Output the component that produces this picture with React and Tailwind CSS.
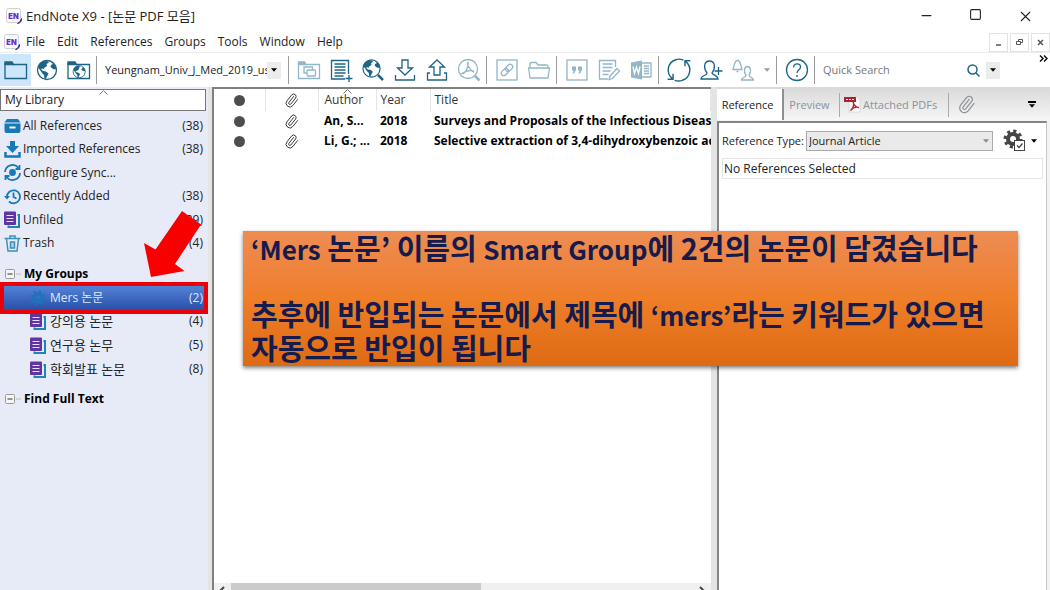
import { useState } from 'react';
import { Minus, Square, X, Paperclip } from 'lucide-react';

const DARK = '#1f6485';
const FADED = '#93b6c8';

const menus = ['File', 'Edit', 'References', 'Groups', 'Tools', 'Window', 'Help'];

const references = [
  { id: 1, author: 'An, S...', year: '2018', title: 'Surveys and Proposals of the Infectious Disease Control' },
  { id: 2, author: 'Li, G.; ...', year: '2018', title: 'Selective extraction of 3,4-dihydroxybenzoic acid' },
];

function Icon({ color = DARK, size = 24, children }) {
  return (
    <svg width={size} height={size} viewBox="0 0 24 24" fill="none" stroke={color} strokeWidth="1.3" aria-hidden="true">
      {children}
    </svg>
  );
}

function Caret({ className = 'text-black' }) {
  return (
    <svg width="6" height="4" viewBox="0 0 7 4" className={className} aria-hidden="true">
      <path d="M0 0h7L3.5 4z" fill="currentColor" />
    </svg>
  );
}

function SortMark() {
  return (
    <svg width="9" height="5" viewBox="0 0 9 5" fill="none" stroke="#777" className="absolute top-0" aria-hidden="true">
      <path d="M.5 4.5l4-4 4 4" />
    </svg>
  );
}

function AppLogo() {
  return (
    <svg width="16" height="16" viewBox="0 0 16 16" className="shrink-0" aria-hidden="true">
      <rect x=".5" y=".5" width="14" height="14" rx="2" fill="#fbfafd" stroke="#cfcfd8" />
      <text x="7.5" y="10.5" textAnchor="middle" fontSize="7.5" fontWeight="900" fontFamily="Inter, sans-serif" fill="#6a2fd0">EN</text>
      <path d="M15.5 10.5c.5 2.500-1 4.500-4 5 2-1 3-2.500 4-5z" fill="#3b2a8c" stroke="#3b2a8c" />
    </svg>
  );
}

// continents shared by every globe icon
function Globe() {
  return (
    <g>
      <circle cx="12" cy="12" r="9.500" />
      <path
        d="M4 6.500C6 4 9 2.500 12 3l2 1.500-2.500 1.500.5 2-3 2 .5 1.500-2-1-1.500.5 2 2 3 .5 2.500 2-1.500 3-1.500 3-1-.5-.5-4-2-2L5 12 3 9.500zM16 3.500l4 3 1.500 4-1 1-2.500-.5-2.500-2 .5-2 2-1z"
        fill={DARK}
        stroke="none"
      />
    </g>
  );
}

function FolderIcon() {
  return (
    <Icon>
      <path d="M1 4h7l1.500 2.500H1z" fill={DARK} />
      <path d="M1 5v15.500h21.500v-14H9" />
    </Icon>
  );
}

function GlobeFolderIcon() {
  return (
    <Icon>
      <path d="M1 4h7l1.500 2.500H1z" fill={DARK} />
      <path d="M1 5v15.500h21.500v-14H9" />
      <g transform="translate(4.500 6) scale(.64)"><Globe /></g>
    </Icon>
  );
}

function CopyFolderIcon() {
  return (
    <Icon color={FADED}>
      <path d="M1.500 4h6l1.500 2.500H1.500z" fill={FADED} />
      <path d="M1.500 5v15.500h21v-14H9M7 9h8.500v6H7z" />
      <rect x="10" y="12" width="8.500" height="6" rx="1" fill="#fff" />
    </Icon>
  );
}

function NewReferenceIcon() {
  return (
    <Icon>
      <path d="M16 21H2.500V2.500h17V16M5.500 6h11M5.500 9h11M5.500 12h11M5.500 15h11M5.500 18h9M20 17v7M16.500 20.500h7" />
    </Icon>
  );
}

function GlobeSearchIcon() {
  return (
    <Icon>
      <g transform="translate(-.3 -.3) scale(.9)"><Globe /></g>
      <path d="M17 17l5 5" strokeWidth="2.500" />
    </Icon>
  );
}

function ImportIcon() {
  return (
    <Icon>
      <path d="M9 2h6v8h4.500L12 17 4.500 10H9zM2.500 17v5h19v-5" />
    </Icon>
  );
}

function ExportIcon() {
  return (
    <Icon>
      <path d="M9 17h6V9h4.500L12 2 4.500 9H9zM5 15H2.500v7h19v-7H19" />
    </Icon>
  );
}

function PdfSearchIcon() {
  return (
    <Icon color={FADED}>
      <circle cx="11" cy="11" r="9.500" />
      <path d="M11 4.500c-1.500 1 .5 6 5.500 9.500 1-2-6-2.500-11.500 1.500 4.500 0 6.500-8 6-11z" />
      <path d="M18 18l4.500 4.500" strokeWidth="2.500" />
    </Icon>
  );
}

function LinkIcon() {
  return (
    <Icon color={FADED}>
      <rect x="2" y="2" width="20" height="20" />
      <g transform="rotate(-45 12 12)">
        <rect x="5" y="9.500" width="8" height="5" rx="2.500" />
        <rect x="11" y="9.500" width="8" height="5" rx="2.500" />
      </g>
    </Icon>
  );
}

function OpenFolderIcon() {
  return (
    <Icon color={FADED}>
      <path d="M3 9.500V5.500l1-1h5l2 2.500h9l1 1v1.500M1.500 10h21L21 20H3z" strokeLinejoin="round" />
    </Icon>
  );
}

function QuoteIcon() {
  return (
    <Icon color={FADED}>
      <rect x="2" y="2" width="20" height="20" />
      <path d="M7 8.500h4v3.500l-2 3.500H7.500l1-3H7zM13 8.500h4v3.500l-2 3.500h-1.500l1-3H13z" fill={FADED} stroke="none" />
    </Icon>
  );
}

function EditDocIcon() {
  return (
    <Icon color={FADED}>
      <path d="M11 21H2.500V2.500h16V9M5.500 6h10M5.500 9.500h10M5.500 13h8M5.500 16.500h6" />
      <path d="M20 10.500l2.500 2.500-7 7.500-3.500 1 1-3.500z" />
    </Icon>
  );
}

function WordIcon() {
  return (
    <Icon color={FADED}>
      <path d="M2 4.500l11-2v19l-11-2z" fill={FADED} stroke="none" />
      <path d="M4 8.500l1.500 7 2-6.500 2 6.500L11 8.500" stroke="#fff" />
      <path d="M13 5h9v14h-9M15 8h5M15 10.500h5M15 13h5M15 15.500h5" />
    </Icon>
  );
}

function SyncIcon() {
  return (
    <Icon size={26}>
      <path d="M6 20A10 10 0 0 1 9 2.500a10 10 0 0 1 7 .3M1.500 20.500h5v-5M18 4a10 10 0 0 1-3 17.500 10 10 0 0 1-7 0M22.500 3.500h-5v5" />
    </Icon>
  );
}

function AddUserIcon() {
  return (
    <Icon>
      <path d="M16 21H2c0-4 6-3 6-6-4-5-3-12 2.500-12S17 10 13 15c0 2 6 2 6 6h-5M19.500 9v8M15.500 13h8" />
    </Icon>
  );
}

function AlertUserIcon() {
  return (
    <Icon color={FADED}>
      <path d="M1.500 11.500c2-1 1-9 5-9s3 8 5 9zM5.500 13.500h2" />
      <path d="M22.500 22h-12c0-3 4.500-2 4.500-5-2.500-3-2-8.500 1.500-8.500s4 5.500 1.500 8.500c0 3 4.500 2 4.500 5z" />
    </Icon>
  );
}

function HelpIcon() {
  return (
    <Icon>
      <circle cx="12" cy="12" r="10.500" />
      <path d="M8.500 9.500c0-5 7-4.500 7-.5 0 3-3.500 3-3.500 6M12 17v2" />
    </Icon>
  );
}

function ToolButton({ label, active, children }) {
  return (
    <button
      aria-label={label}
      className={`flex shrink-0 items-center justify-center ${active ? 'h-8 w-[31px] bg-[#cce6fb]' : 'h-8 w-8'}`}
    >
      {children}
    </button>
  );
}

function Separator() {
  return <div className="ml-px mr-1 h-7 w-px shrink-0 bg-[#9b9b9b]" />;
}

function AllIcon() {
  return (
    <svg width="17" height="16" viewBox="0 0 17 16" aria-hidden="true">
      <path d="M3 1h11l2.500 3.500H.5zM.5 5.500h16V13a2 2 0 0 1-2 2h-12a2 2 0 0 1-2-2z" fill="#1779b5" />
      <path d="M5.500 9.500h6" stroke="#fff" strokeWidth="2" />
    </svg>
  );
}

function ImportedIcon() {
  return (
    <svg width="17" height="17" viewBox="0 0 17 17" aria-hidden="true">
      <path d="M6 0h5v5h4l-6.500 7L2 5h4z" fill="#1779b5" />
      <path d="M1.500 11v4.500h14V11" stroke="#1779b5" strokeWidth="2.500" fill="none" />
    </svg>
  );
}

function ConfigureIcon() {
  return (
    <svg width="17" height="17" viewBox="0 0 17 17" fill="none" stroke="#1779b5" strokeWidth="1.800" aria-hidden="true">
      <circle cx="8.500" cy="8.500" r="2.500" fill="#1779b5" />
      <path d="M1 8a7.500 7.500 0 0 1 13.500-4M16 9a7.500 7.500 0 0 1-13.500 4M15.500 1v4h-4M1.500 16v-4h4" />
    </svg>
  );
}

function RecentIcon() {
  return (
    <svg width="17" height="17" viewBox="0 0 17 17" fill="none" stroke="#1779b5" strokeWidth="1.800" aria-hidden="true">
      <path d="M3 9a6.500 6.500 0 1 1 2 4.500M9.500 4.500V9l3 1.500" />
      <path d="M0 8h6L3 11.500z" fill="#1779b5" stroke="none" />
    </svg>
  );
}

function GroupIcon() {
  return (
    <svg width="17" height="17" viewBox="0 0 17 17" aria-hidden="true">
      <path d="M13.500 4H15v12H4.500v-1.500" fill="none" stroke="#1d84bd" strokeWidth="2" />
      <rect x="0" y=".5" width="12" height="13.500" rx="1" fill="#5f35a5" />
      <path d="M2.500 4.500h7M2.500 7.500h7M2.500 10.500h7" stroke="#e8e0f5" />
    </svg>
  );
}

function TrashIcon() {
  return (
    <svg width="17" height="17" viewBox="0 0 17 17" fill="none" stroke="#3d90b8" strokeWidth="1.500" aria-hidden="true">
      <path d="M.5 3.500h16M6 3V1h5v2M2.500 4L4 16h9l1.500-12" />
      <path d="M6.500 7h4v6h-4z" fill="#a9d3e6" />
    </svg>
  );
}

function GearShape({ color, size }) {
  return (
    <svg width={size} height={size} viewBox="0 0 20 20" fill="none" stroke={color} aria-hidden="true">
      <circle cx="10" cy="10" r="5" strokeWidth="4" />
      <circle cx="10" cy="10" r="8" strokeWidth="3" strokeDasharray="3.140 3.140" />
    </svg>
  );
}

function PdfIcon() {
  return (
    <svg width="17" height="17" viewBox="0 0 17 17" aria-hidden="true">
      <path d="M5 1h8l3 3v12H5z" fill="#fff" stroke="#d8d8d8" />
      <rect x="0" y="1" width="12" height="5" fill="#b3202a" />
      <path d="M2 3.500h8" stroke="#fff" strokeDasharray="2 1" />
      <path d="M9 5.500c1 4 3 6 6 6-3-1-6 0-8.500 3 2.500-2 4-6 2.500-9z" fill="none" stroke="#b3202a" strokeWidth="1.300" />
    </svg>
  );
}

const library = [
  { name: 'All References', count: 38, icon: AllIcon },
  { name: 'Imported References', count: 38, icon: ImportedIcon },
  { name: 'Configure Sync...', icon: ConfigureIcon },
  { name: 'Recently Added', count: 38, icon: RecentIcon },
  { name: 'Unfiled', count: 29, icon: GroupIcon },
  { name: 'Trash', count: 4, icon: TrashIcon },
];

const groups = [
  { name: 'Mers 논문', count: 2, smart: true },
  { name: '강의용 논문', count: 4 },
  { name: '연구용 논무', count: 5 },
  { name: '학회발표 논문', count: 8 },
];

function GroupHeading({ children }) {
  return (
    <h2 className="flex items-center pl-[5px] font-bold text-black">
      <svg width="19" height="10" viewBox="0 0 19 10" aria-hidden="true">
        <rect x=".5" y=".5" width="9" height="9" rx="1" fill="#f4f4f4" stroke="#9a9a9a" />
        <path d="M2.500 5h5" stroke="#333" />
        <path d="M11 5h5" stroke="#bbb" />
      </svg>
      {children}
    </h2>
  );
}

function Sidebar() {
  return (
    <aside className="relative w-52 shrink-0 bg-[#e7ebf8] text-[#222]">
      <div className="relative mr-0.5 mt-0.5 flex h-[22px] items-center justify-center border border-[#777] bg-white">
        <SortMark />
        <span className="w-full pl-1">My Library</span>
      </div>

      <ul className="mt-[3px] grid h-[141px] grid-rows-6">
        {library.map((item) => (
          <li key={item.name} className="flex items-center pl-1 pr-[5px]">
            <item.icon />
            <span className="flex-1 pl-[2px]">{item.name}</span>
            {item.count && <span>({item.count})</span>}
          </li>
        ))}
      </ul>

      <div className="mt-[7px] grid h-[119px] grid-rows-5">
        <GroupHeading>My Groups</GroupHeading>
        {groups.map((item) => (
          <div
            key={item.name}
            className={`relative flex items-center pl-[30px] pr-[5px] ${item.smart ? 'text-[#dfe8ff]' : 'z-0'}`}
          >
            {item.smart && (
              <div className="absolute -inset-y-1 inset-x-0 z-10 border-4 border-[#ea0008] bg-linear-to-b from-[#5283d6] to-[#2a4fa8]" />
            )}
            <span className="relative z-10 flex w-[17px]">
              {item.smart ? <GearShape color="#1b74bd" size={16} /> : <GroupIcon />}
            </span>
            <span className={`relative z-10 flex-1 pl-[3px] ${item.smart ? 'text-[12px]' : 'text-[13px]'}`}>{item.name}</span>
            <span className="relative z-10">({item.count})</span>
          </div>
        ))}
      </div>

      <div className="mt-1.5 grid h-6">
        <GroupHeading>Find Full Text</GroupHeading>
      </div>

      {/* callout arrow pointing at the smart group */}
      <svg width="58" height="66" viewBox="0 0 58 66" className="absolute left-[144px] top-[124px]" aria-hidden="true">
        <path d="M38 0l19 13.500L31 53l9.500 7L7 66 0 32l11.500 6.500z" fill="#f80000" />
      </svg>
    </aside>
  );
}

function ReferenceList() {
  return (
    <main className="flex min-w-0 flex-1 flex-col border-l-2 border-t-2 border-[#808080] bg-white">
      <div className="flex-1 overflow-hidden">
        <table className="w-full table-fixed text-left text-black">
          <colgroup>
            <col className="w-[51px]" />
            <col className="w-[53px]" />
            <col className="w-[58px]" />
            <col className="w-[54px]" />
            <col />
          </colgroup>
          <thead>
            <tr className="h-[22px] text-[#333] [&>th]:border-r [&>th]:border-[#e5e5e5] [&>th]:font-normal">
              <th aria-label="Read status"><span className="mx-auto block size-[11px] rounded-full bg-[#4d4d4d]" /></th>
              <th aria-label="Attachment"><Paperclip size={15} strokeWidth={1.5} className="mx-auto -rotate-6" /></th>
              <th className="relative pl-1.5">
                <span className="absolute inset-x-0 top-0 flex justify-center"><SortMark /></span>
                Author
              </th>
              <th className="pl-1">Year</th>
              <th className="pl-1">Title</th>
            </tr>
          </thead>
          <tbody>
            {references.map((ref) => (
              <tr key={ref.id} className="h-5 font-bold">
                <td><span className="mx-auto block size-[11px] rounded-full bg-[#4d4d4d]" /></td>
                <td><Paperclip size={15} strokeWidth={1.5} className="mx-auto -rotate-6 text-[#333]" /></td>
                <td className="whitespace-nowrap pl-1.5">{ref.author}</td>
                <td className="pl-1">{ref.year}</td>
                <td className="overflow-hidden whitespace-nowrap pl-1">{ref.title}</td>
              </tr>
            ))}
          </tbody>
        </table>
      </div>
      <div className="flex h-[7px] items-start justify-between overflow-hidden bg-[#f0f0f0] text-[#444]">
        <svg width="17" height="14" viewBox="0 0 17 14" fill="none" stroke="currentColor" strokeWidth="2" aria-hidden="true"><path d="M10 4L6 8l4 4" /></svg>
        <div className="flex-1"><div className="h-[7px] w-[54%] bg-[#cbcbcb]" /></div>
        <svg width="17" height="14" viewBox="0 0 17 14" fill="none" stroke="currentColor" strokeWidth="2" aria-hidden="true"><path d="M6 4l4 4-4 4" /></svg>
      </div>
    </main>
  );
}

function DetailPanel() {
  const [type, setType] = useState('Journal Article');

  return (
    <section className="flex w-[333px] shrink-0 flex-col bg-[#f3f3f3]">
      <div role="tablist" className="flex h-[33px] items-center bg-linear-to-b from-[#d9d9d9] to-[#f6f6f6] pt-0.5 text-[11px] text-[#8b929b]">
        <button role="tab" aria-selected="true" className="h-full w-[67px] border-r-2 border-[#8f8f8f] bg-white pr-1 text-[#222]">Reference</button>
        <button role="tab" aria-selected="false" className="h-6 w-14 border-r border-[#aaa] pr-1">Preview</button>
        <button role="tab" aria-selected="false" className="flex h-6 w-[109px] items-center gap-0.5 border-r border-[#aaa] pl-1">
          <PdfIcon />
          Attached PDFs
        </button>
        <button role="tab" aria-selected="false" aria-label="Attachments" className="w-9 pl-2">
          <Paperclip size={19} strokeWidth={1.5} className="-rotate-6" />
        </button>
        <button aria-label="Panel options" className="ml-auto mr-3.5 flex flex-col items-center gap-px">
          <span className="h-0.5 w-2 bg-black" />
          <Caret />
        </button>
      </div>

      <div className="mr-[3px] mt-px flex-1 border-l-2 border-r border-t-2 border-[#858585] border-r-[#c8c8c8] bg-white px-[3px] text-[#222]">
        <div className="flex h-[35px] items-center text-[11px]">
          <label htmlFor="reference-type" className="w-[84px] whitespace-nowrap">Reference Type:</label>
          <div className="relative flex min-w-0 flex-1 items-center">
            <select
              id="reference-type"
              value={type}
              onChange={(e) => setType(e.target.value)}
              className="h-5 w-full appearance-none border border-[#aaa] bg-[#eaeaea] pl-0.5"
            >
              <option>Journal Article</option>
            </select>
            <span className="pointer-events-none absolute right-1"><Caret className="text-[#8b8b8b]" /></span>
          </div>
          <button aria-label="Field options" className="ml-2.5 mr-1.5 flex items-center gap-1">
            <span className="relative flex size-[24px]">
              <GearShape color="#444" size={20} />
              <svg width="11" height="11" viewBox="0 0 11 11" className="absolute bottom-0.5 right-0.5" aria-hidden="true">
                <rect x=".5" y=".5" width="10" height="10" fill="#fff" stroke="#444" />
                <path d="M3 5.500l2 2 3.500-4" fill="none" stroke="#444" strokeWidth="1.300" />
              </svg>
            </span>
            <Caret />
          </button>
        </div>
        <p className="flex h-[21px] items-center border border-[#e6e6e6] pl-px">No References Selected</p>
      </div>
    </section>
  );
}

function Toolbar() {
  const [style, setStyle] = useState('Yeungnam_Univ_J_Med_2019_using');
  const [query, setQuery] = useState('');

  return (
    <div className="relative flex h-[35px] items-center border-t border-[#ececec] bg-white">
      <ToolButton label="Local library" active><FolderIcon /></ToolButton>
      <ToolButton label="Online search"><Icon><Globe /></Icon></ToolButton>
      <ToolButton label="Integrated library"><GlobeFolderIcon /></ToolButton>
      <Separator />
      <div className="relative flex w-[186px] shrink-0 items-center pl-1">
        <select
          aria-label="Output style"
          value={style}
          onChange={(e) => setStyle(e.target.value)}
          className="w-[162px] appearance-none overflow-hidden text-[11px] text-[#222]"
        >
          <option>Yeungnam_Univ_J_Med_2019_using</option>
        </select>
        <span className="pointer-events-none flex h-[17px] w-3.5 items-center justify-center bg-[#ececec]"><Caret /></span>
      </div>
      <Separator />
      <ToolButton label="Copy to local library"><CopyFolderIcon /></ToolButton>
      <ToolButton label="New reference"><NewReferenceIcon /></ToolButton>
      <ToolButton label="Search online"><GlobeSearchIcon /></ToolButton>
      <ToolButton label="Import"><ImportIcon /></ToolButton>
      <ToolButton label="Export"><ExportIcon /></ToolButton>
      <ToolButton label="Find full text"><PdfSearchIcon /></ToolButton>
      <Separator />
      <ToolButton label="Open link"><LinkIcon /></ToolButton>
      <ToolButton label="Open file"><OpenFolderIcon /></ToolButton>
      <Separator />
      <ToolButton label="Insert citation"><QuoteIcon /></ToolButton>
      <ToolButton label="Format bibliography"><EditDocIcon /></ToolButton>
      <ToolButton label="Return to word processor"><WordIcon /></ToolButton>
      <Separator />
      <ToolButton label="Sync library"><SyncIcon /></ToolButton>
      <ToolButton label="Share library"><AddUserIcon /></ToolButton>
      <ToolButton label="Activity feed"><AlertUserIcon /></ToolButton>
      <span className="flex w-4 shrink-0 justify-center"><Caret className="text-[#999]" /></span>
      <Separator />
      <ToolButton label="Help"><HelpIcon /></ToolButton>
      <Separator />
      <input
        aria-label="Quick Search"
        placeholder="Quick Search"
        value={query}
        onChange={(e) => setQuery(e.target.value)}
        className="min-w-0 flex-1 pl-1 text-[11px] outline-none placeholder:text-[#777]"
      />
      <button aria-label="Search" className="mr-1.5">
        <svg width="13" height="13" viewBox="0 0 13 13" fill="none" stroke={DARK} strokeWidth="1.500" aria-hidden="true">
          <circle cx="5.500" cy="5.500" r="4.500" />
          <path d="M9 9l3.500 3.500" />
        </svg>
      </button>
      <button aria-label="Search options" className="mr-[50px] flex h-[17px] w-3.5 items-center justify-center bg-[#ececec]"><Caret /></button>
      <button aria-label="More tools" className="absolute right-0.5 top-0.5">
        <svg width="9" height="7" viewBox="0 0 9 7" fill="none" stroke="#111" strokeWidth="1.500" aria-hidden="true">
          <path d="M1 .5l3 3-3 3M5 .5l3 3-3 3" />
        </svg>
      </button>
    </div>
  );
}

export default function App() {
  return (
    <div className="relative flex h-screen flex-col overflow-hidden bg-white font-['Open_Sans','Noto_Sans_CJK_KR',sans-serif] text-[12px] leading-4">
      <header className="flex h-8 items-center gap-1 pl-1.5 text-[#222]">
        <AppLogo />
        <h1 className="flex-1 text-[13px]">EndNote X9 - [논문 PDF 모음]</h1>
        <div className="flex">
          <button aria-label="Minimize" className="flex w-[49px] justify-center"><Minus size={15} strokeWidth={2} /></button>
          <button aria-label="Maximize" className="flex w-[49px] justify-center"><Square size={13} strokeWidth={2} /></button>
          <button aria-label="Close" className="flex w-[50px] justify-center"><X size={17} strokeWidth={1.5} /></button>
        </div>
      </header>

      <nav className="flex h-5 items-center pl-1 text-[#222]">
        <AppLogo />
        <div className="flex flex-1 gap-3 pl-1.5">
          {menus.map((menu) => (
            <button key={menu}>{menu}</button>
          ))}
        </div>
        <div className="flex gap-0.5 text-[#555]">
          <button aria-label="Minimize document" className="flex h-[19px] w-[19px] items-center justify-center border border-[#e2e2e2]">
            <svg width="7" height="7" viewBox="0 0 7 7" stroke="currentColor" strokeWidth="1.500" aria-hidden="true"><path d="M1 6h5" /></svg>
          </button>
          <button aria-label="Restore document" className="flex h-[19px] w-[19px] items-center justify-center border border-[#e2e2e2]">
            <svg width="7" height="7" viewBox="0 0 7 7" fill="none" stroke="currentColor" aria-hidden="true"><path d="M2.500 2V.5h4v3H5M.5 2.500h4v3h-4z" /></svg>
          </button>
          <button aria-label="Close document" className="flex h-[19px] w-[19px] items-center justify-center border border-[#e2e2e2]">
            <svg width="7" height="7" viewBox="0 0 7 7" stroke="currentColor" strokeWidth="1.500" aria-hidden="true"><path d="M1 1l5 5M6 1L1 6" /></svg>
          </button>
        </div>
      </nav>

      <Toolbar />

      <div className="flex min-h-0 flex-1">
        <Sidebar />
        <div className="w-1 shrink-0 bg-[#e4e4e4]" />
        <ReferenceList />
        <div className="w-1.5 shrink-0 bg-[#e4e4e4]" />
        <DetailPanel />
      </div>

      <div className="absolute left-[243px] right-8 top-[231px] h-[135px] bg-linear-to-b from-[#ed8c52] via-[#ef7e28] to-[#de6b12] pl-2 font-['Noto_Sans_CJK_KR',sans-serif] text-[29px] font-bold leading-8 text-[#151b4d] shadow-[0_2px_4px_rgba(0,0,0,0.5)]">
        <p>
          <span className="text-[26px]">‘Mers</span> 논문’ 이름의 <span className="text-[26px]">Smart Group</span>에 2건의 논문이 담겼습니다
        </p>
        <p className="pt-8">
          추후에 반입되는 논문에서 제목에 <span className="text-[26px]">‘mers’</span>라는 키워드가 있으면
          <br />
          자동으로 반입이 됩니다
        </p>
      </div>
    </div>
  );
}
